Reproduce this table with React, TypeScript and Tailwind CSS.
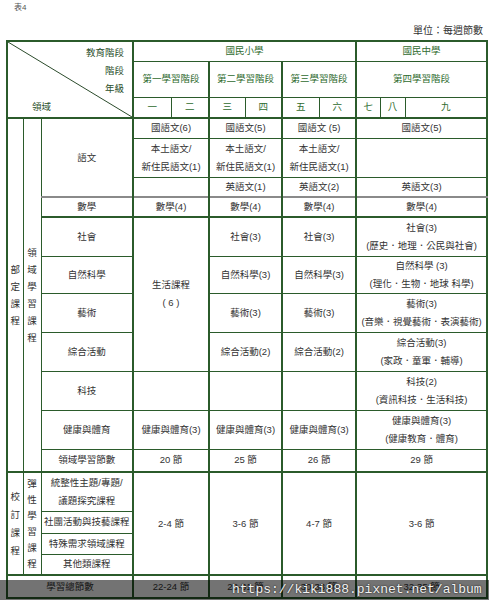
import React from "react";

const cell = "border border-[#2b5b2b] p-0 text-center align-middle";
const stage = "border border-l-2 border-[#2b5b2b] p-0 text-center align-middle";
const head = "text-[#2e6b2e]";

const TwoLine: React.FC<{ a: string; b: string }> = ({ a, b }) => (
  <div className="leading-[18px]">
    <div>{a}</div>
    <div>{b}</div>
  </div>
);

const Vertical: React.FC<{ text: string; step: string }> = ({ text, step }) => (
  <div className={`flex flex-col items-center ${step}`}>
    {text.split("").map((ch, i) => (
      <span key={i}>{ch}</span>
    ))}
  </div>
);

export default function App() {
  return (
    <div className="relative w-[489px] h-[600px] overflow-hidden bg-white font-['Liberation_Sans','Noto_Sans_CJK_TC',sans-serif] text-[9.5px] leading-[12px] text-[#333]">
      {/* caption + unit */}
      <div className="h-[40px] flex flex-col justify-between">
        <div className="pl-[14px] pt-[3px] text-[8px] leading-[10px] text-[#555]">表4</div>
        <div className="pr-[6px] pb-[3px] text-right text-[10px] leading-[12px] text-[#333]">單位：每週節數</div>
      </div>

      <table className="ml-[6px] w-[480px] table-fixed border-collapse border-2 border-[#2b5b2b]">
        <colgroup>
          <col className="w-[16px]" />
          <col className="w-[18px]" />
          <col className="w-[92px]" />
          <col className="w-[38px]" />
          <col className="w-[38px]" />
          <col className="w-[36px]" />
          <col className="w-[37px]" />
          <col className="w-[37px]" />
          <col className="w-[37px]" />
          <col className="w-[24px]" />
          <col className="w-[25px]" />
          <col className="w-[82px]" />
        </colgroup>
        <thead>
          <tr className="h-[20px]">
            <td colSpan={3} rowSpan={3} className={`${cell} relative`}>
              <svg className="absolute inset-0 w-full h-full" viewBox="0 0 100 100" preserveAspectRatio="none">
                <line x1="0" y1="0" x2="100" y2="100" stroke="#2b4b2b" strokeWidth="1" vectorEffect="non-scaling-stroke" />
              </svg>
              <div className="relative h-[72px] leading-[18px] text-[#2c4f2c] pr-[8px]">
                <div className="text-right">教育階段</div>
                <div className="text-right">階段</div>
                <div className="text-right">年級</div>
                <div className="text-left pl-[24px]">領域</div>
              </div>
            </td>
            <td colSpan={6} className={`${stage} ${head}`}>國民小學</td>
            <td colSpan={3} className={`${stage} ${head}`}>國民中學</td>
          </tr>
          <tr className="h-[36px]">
            <td colSpan={2} className={`${stage} ${head}`}>第一學習階段</td>
            <td colSpan={2} className={`${stage} ${head}`}>第二學習階段</td>
            <td colSpan={2} className={`${stage} ${head}`}>第三學習階段</td>
            <td colSpan={3} className={`${stage} ${head}`}>第四學習階段</td>
          </tr>
          <tr className="h-[21px]">
            <td className={`${stage} ${head}`}>一</td>
            <td className={`${cell} ${head}`}>二</td>
            <td className={`${stage} ${head}`}>三</td>
            <td className={`${cell} ${head}`}>四</td>
            <td className={`${stage} ${head}`}>五</td>
            <td className={`${cell} ${head}`}>六</td>
            <td className={`${stage} ${head}`}>七</td>
            <td className={`${cell} ${head}`}>八</td>
            <td className={`${cell} ${head}`}>九</td>
          </tr>
        </thead>
        <tbody>
          <tr className="h-[20px]">
            <td rowSpan={11} className={`${cell} border-t-2`}>
              <Vertical text="部定課程" step="leading-[17px]" />
            </td>
            <td rowSpan={11} className={`${cell} border-t-2`}>
              <Vertical text="領域學習課程" step="leading-[17px]" />
            </td>
            <td rowSpan={3} className={`${cell} border-t-2`}>語文</td>
            <td colSpan={2} className={`${stage} border-t-2`}>國語文(6)</td>
            <td colSpan={2} className={`${stage} border-t-2`}>國語文(5)</td>
            <td colSpan={2} className={`${stage} border-t-2`}>國語文 (5)</td>
            <td colSpan={3} className={`${stage} border-t-2`}>國語文(5)</td>
          </tr>
          <tr className="h-[39px]">
            <td colSpan={2} className={stage}><TwoLine a="本土語文/" b="新住民語文(1)" /></td>
            <td colSpan={2} className={stage}><TwoLine a="本土語文/" b="新住民語文(1)" /></td>
            <td colSpan={2} className={stage}><TwoLine a="本土語文/" b="新住民語文(1)" /></td>
            <td colSpan={3} className={stage}></td>
          </tr>
          <tr className="h-[20px]">
            <td colSpan={2} className={stage}></td>
            <td colSpan={2} className={stage}>英語文(1)</td>
            <td colSpan={2} className={stage}>英語文(2)</td>
            <td colSpan={3} className={stage}>英語文(3)</td>
          </tr>
          <tr className="h-[20px]">
            <td className={`${cell} border-t-2 border-t-[#8a8a8a]`}>數學</td>
            <td colSpan={2} className={`${stage} border-t-2 border-t-[#8a8a8a]`}>數學(4)</td>
            <td colSpan={2} className={`${stage} border-t-2 border-t-[#8a8a8a]`}>數學(4)</td>
            <td colSpan={2} className={`${stage} border-t-2 border-t-[#8a8a8a]`}>數學(4)</td>
            <td colSpan={3} className={`${stage} border-t-2 border-t-[#8a8a8a]`}>數學(4)</td>
          </tr>
          <tr className="h-[39px]">
            <td className={`${cell} border-t-2`}>社會</td>
            <td colSpan={2} rowSpan={4} className={`${stage} border-t-2`}>
              <TwoLine a="生活課程" b="( 6 )" />
            </td>
            <td colSpan={2} className={`${stage} border-t-2`}>社會(3)</td>
            <td colSpan={2} className={`${stage} border-t-2`}>社會(3)</td>
            <td colSpan={3} className={`${stage} border-t-2`}><TwoLine a="社會(3)" b="(歷史．地理．公民與社會)" /></td>
          </tr>
          <tr className="h-[36px]">
            <td className={cell}>自然科學</td>
            <td colSpan={2} className={stage}>自然科學(3)</td>
            <td colSpan={2} className={stage}>自然科學(3)</td>
            <td colSpan={3} className={stage}><TwoLine a="自然科學 (3)" b="(理化．生物．地球 科學)" /></td>
          </tr>
          <tr className="h-[39px]">
            <td className={cell}>藝術</td>
            <td colSpan={2} className={stage}>藝術(3)</td>
            <td colSpan={2} className={stage}>藝術(3)</td>
            <td colSpan={3} className={stage}><TwoLine a="藝術(3)" b="(音樂．視覺藝術．表演藝術)" /></td>
          </tr>
          <tr className="h-[39px]">
            <td className={cell}>綜合活動</td>
            <td colSpan={2} className={stage}>綜合活動(2)</td>
            <td colSpan={2} className={stage}>綜合活動(2)</td>
            <td colSpan={3} className={stage}><TwoLine a="綜合活動(3)" b="(家政．童軍．輔導)" /></td>
          </tr>
          <tr className="h-[39px]">
            <td className={cell}>科技</td>
            <td colSpan={2} className={stage}></td>
            <td colSpan={2} className={stage}></td>
            <td colSpan={2} className={stage}></td>
            <td colSpan={3} className={stage}><TwoLine a="科技(2)" b="(資訊科技．生活科技)" /></td>
          </tr>
          <tr className="h-[39px]">
            <td className={cell}>健康與體育</td>
            <td colSpan={2} className={stage}>健康與體育(3)</td>
            <td colSpan={2} className={stage}>健康與體育(3)</td>
            <td colSpan={2} className={stage}>健康與體育(3)</td>
            <td colSpan={3} className={stage}><TwoLine a="健康與體育(3)" b="(健康教育．體育)" /></td>
          </tr>
          <tr className="h-[23px]">
            <td className={cell}>領域學習節數</td>
            <td colSpan={2} className={stage}>20 節</td>
            <td colSpan={2} className={stage}>25 節</td>
            <td colSpan={2} className={stage}>26 節</td>
            <td colSpan={3} className={stage}>29 節</td>
          </tr>
          <tr className="h-[39px]">
            <td rowSpan={4} className={`${cell} border-t-2`}>
              <Vertical text="校訂課程" step="leading-[18px]" />
            </td>
            <td rowSpan={4} className={`${cell} border-t-2`}>
              <Vertical text="彈性學習課程" step="leading-[16px]" />
            </td>
            <td className={`${cell} border-t-2`}><TwoLine a="統整性主題/專題/" b="議題探究課程" /></td>
            <td colSpan={2} rowSpan={4} className={`${stage} border-t-2`}>2-4 節</td>
            <td colSpan={2} rowSpan={4} className={`${stage} border-t-2`}>3-6 節</td>
            <td colSpan={2} rowSpan={4} className={`${stage} border-t-2`}>4-7 節</td>
            <td colSpan={3} rowSpan={4} className={`${stage} border-t-2`}>3-6 節</td>
          </tr>
          <tr className="h-[22px]">
            <td className={cell}>社團活動與技藝課程</td>
          </tr>
          <tr className="h-[21px]">
            <td className={cell}>特殊需求領域課程</td>
          </tr>
          <tr className="h-[21px]">
            <td className={cell}>其他類課程</td>
          </tr>
          <tr className="h-[23px]">
            <td colSpan={3} className={`${cell} border-t-2`}>學習總節數</td>
            <td colSpan={2} className={`${stage} border-t-2`}>22-24 節</td>
            <td colSpan={2} className={`${stage} border-t-2`}>28-31 節</td>
            <td colSpan={2} className={`${stage} border-t-2`}>30-33 節</td>
            <td colSpan={3} className={`${stage} border-t-2`}>32-35 節</td>
          </tr>
        </tbody>
      </table>

      {/* watermark band */}
      <div className="absolute left-0 right-0 top-[580px] h-[20px] bg-black/55 flex items-center">
        <span className="pl-[232px] whitespace-nowrap font-['Liberation_Mono',monospace] text-[13px] leading-[20px] text-[#f2f2f2] [text-shadow:0_0_2px_#000]">
          https://kiki888.pixnet.net/album
        </span>
      </div>
    </div>
  );
}
